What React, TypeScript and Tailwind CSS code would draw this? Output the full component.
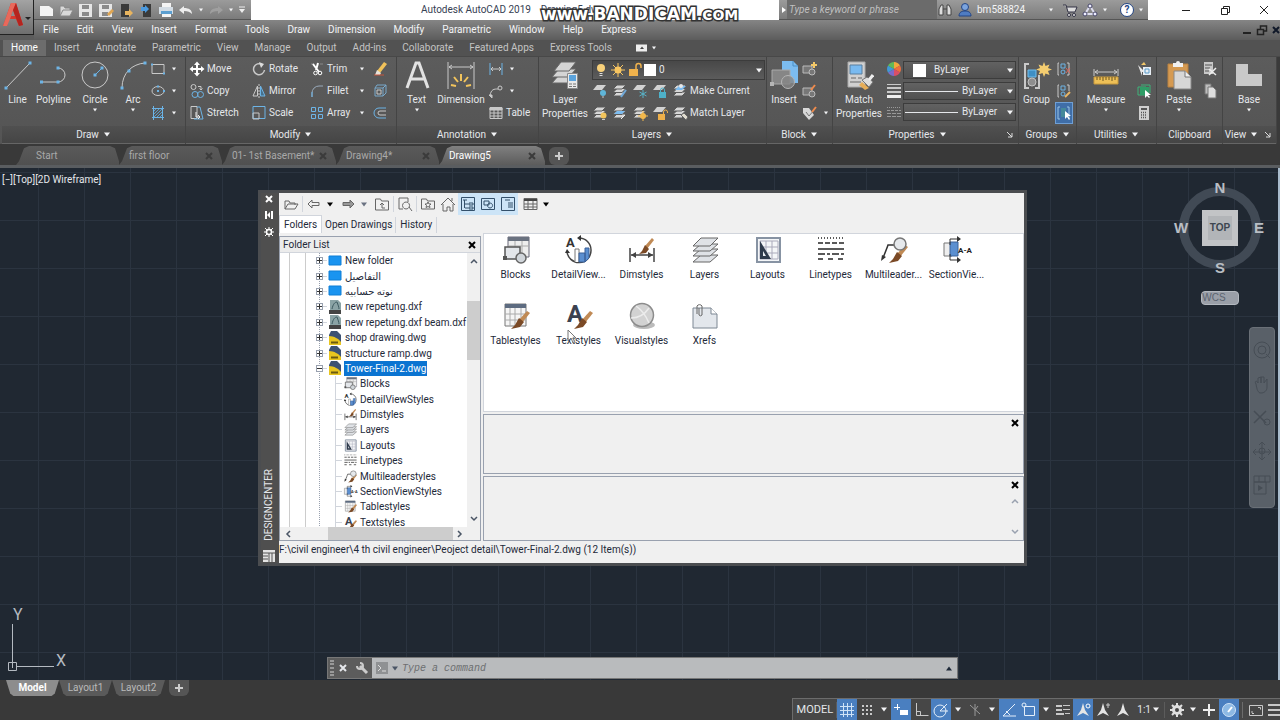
import type { ReactNode } from "react";
import clsx from "clsx";

type IconProps = { w?: number; h?: number; children: ReactNode; className?: string };

const Icon = ({ w = 16, h = 16, children, className }: IconProps) => (
  <svg
    width={w}
    height={h}
    viewBox={`0 0 ${w} ${h}`}
    fill="none"
    stroke="#c9c9c9"
    strokeWidth="1"
    className={clsx("shrink-0", className)}
    aria-hidden="true"
  >
    {children}
  </svg>
);

const Caret = ({ className }: { className?: string }) => (
  <svg width="8" height="5" viewBox="0 0 8 5" className={clsx("shrink-0", className ?? "fill-gray-100")} aria-hidden="true">
    <path d="M1 0.5h6L4 4.5z" />
  </svg>
);

const SmallCaret = () => (
  <svg width="6" height="4" viewBox="0 0 6 4" className="shrink-0 fill-gray-100" aria-hidden="true">
    <path d="M1 0.5h4L3 3.5z" />
  </svg>
);

const Cross = ({ className }: { className?: string }) => (
  <svg width="8" height="8" viewBox="0 0 8 8" fill="none" strokeWidth="2" className={clsx("shrink-0", className)} aria-hidden="true">
    <path d="M1 1l6 6M7 1L1 7" />
  </svg>
);

/* ---------- large ribbon icons ---------- */

const blue = "#6db4e6";

const big: Record<string, ReactNode> = {
  line: (
    <Icon w={30} h={30}>
      <path d="M3 28L27 3" />
      <path d="M1.5 26.5h3v3h-3zM25.5 1.5h3v3h-3z" fill={blue} stroke="none" />
    </Icon>
  ),
  polyline: (
    <Icon w={30} h={30}>
      <path d="M2 22H19a7 7 0 0 0 0-14" />
      <path d="M1 20.5h3v3H1zM17.5 20.5h3v3h-3zM17.5 6.5h3v3h-3z" fill={blue} stroke="none" />
    </Icon>
  ),
  circle: (
    <Icon w={30} h={30}>
      <circle cx="15" cy="15" r="13" />
      <path d="M15 15l7-7" stroke={blue} />
      <path d="M13.5 13.5h3v3h-3zM20.5 6.5h3v3h-3z" fill={blue} stroke="none" />
    </Icon>
  ),
  arc: (
    <Icon w={30} h={30}>
      <path d="M4 28C4 13 14 4 27 3" />
      <path d="M2.5 26.5h3v3h-3zM9.5 9.5h3v3h-3zM25.5 1.5h3v3h-3z" fill={blue} stroke="none" />
    </Icon>
  ),
  text: (
    <Icon w={30} h={30}>
      <path d="M5 28L14 3h3l9 25M9 19h13" stroke="#e2e2e2" strokeWidth="3" />
    </Icon>
  ),
  dimension: (
    <Icon w={30} h={30}>
      <path d="M2 2v27M28 2v27M3 7h24M6 5L3 7l3 2M24 5l3 2-3 2" />
      <path d="M15 14v7M8 17l4 5M22 17l-4 5M5 25l5 1M25 25l-5 1" stroke="#f2c45c" strokeWidth="2" />
    </Icon>
  ),
  layers: (
    <Icon w={30} h={30}>
      <g fill="#d4d4d4" stroke="#666">
        <path d="M2 23L9 15h17l-7 8z" />
        <path d="M2 17L9 9h17l-7 8z" />
        <path d="M4 11L11 2h15l-7 9z" />
      </g>
      <path d="M17.5 13.5h10v15h-10z" fill="#e8e8e8" stroke="#888" />
      <path d="M19 15h7v6h-7z" fill="#5ba3dc" stroke="none" />
      <path d="M19 24h3M23 24h3M19 26.5h3M23 26.5h3" stroke="#777" />
    </Icon>
  ),
  insert: (
    <Icon w={30} h={30}>
      <path d="M13 1h11l5 5v17H13z" fill="#7cbcf0" stroke="none" />
      <path d="M24 1v5h5" stroke="#4b8fc6" />
      <path d="M3 10h18v14H3z" fill="#868686" stroke="#a9a9a9" />
      <circle cx="19" cy="22" r="6.5" fill="#868686" fillOpacity="0.8" stroke="#b5b5b5" />
      <path d="M1 22h4v4H1z" fill="#b5b5b5" stroke="none" />
    </Icon>
  ),
  match: (
    <Icon w={30} h={30}>
      <path d="M4 2h17v25H4z" fill="#d0d0d0" stroke="#aaa" />
      <path d="M6 5h12v9H6z" fill="#79baf0" stroke="#5a7f9e" />
      <path d="M7 18h5M14 18h4M6 22h11" stroke="#666" />
      <path d="M18 22l7 6-4 2-6-5z" fill="#e6ad58" stroke="none" />
      <path d="M18 20l5-3 6 5-4 5z" fill="#dedede" stroke="#777" />
      <path d="M25 20l4-5" stroke="#eee" strokeWidth="3" />
    </Icon>
  ),
  group: (
    <Icon w={30} h={30}>
      <path d="M7 4H3v24h4M13 28h4V15" strokeWidth="2" />
      <path d="M6 10h8v7H6z" fill="#3f8fc4" stroke="#70bdec" />
      <circle cx="10" cy="22" r="4" fill="#8e8e8e" stroke="#c1c1c1" />
      <path d="M22 2l1.5 4 4-1.5L26 8l4 1.5-4 1.5 1.5 4-4-1.5L22 17l-1.5-4-4 1.5L18 11l-4-1.5L18 8l-1.5-3.5 4 1.5z" fill="#f4cd70" stroke="none" />
    </Icon>
  ),
  measure: (
    <Icon w={30} h={30}>
      <path d="M3 9v7M27 9v7M4 12h22M7 10l-3 2 3 2M23 10l3 2-3 2" />
      <path d="M3 17h24v7H3z" fill="#eec057" stroke="#c99a3c" />
      <path d="M6 17v3M9 17v3M12 17v4M15 17v3M18 17v3M21 17v4M24 17v3" stroke="#6b5520" />
    </Icon>
  ),
  paste: (
    <Icon w={30} h={30}>
      <path d="M4 4h20v23H4z" fill="#d59a52" stroke="#b98140" />
      <path d="M9 5V3h3a2 2 0 0 1 4 0h3v4H9z" fill="#f1f1f1" stroke="none" />
      <path d="M10 11h11l6 6v12H10z" fill="#d7d7d7" stroke="#888" />
      <path d="M21 11v6h6" stroke="#777" fill="#efefef" />
    </Icon>
  ),
  base: (
    <Icon w={30} h={30}>
      <path d="M2 4h12v10h14v12H2z" fill="#c9c9c9" stroke="none" />
    </Icon>
  ),
};

/* ---------- small ribbon icons ---------- */

const SheetBase = () => (
  <g fill="#d6d6d6" stroke="#5a5a5a">
    <path d="M1 13l4-4h9l-4 4z" />
    <path d="M1 9.5l4-4h9l-4 4z" />
    <path d="M1 6l4-4h9L10 6z" />
  </g>
);

const OneSheet = () => <path d="M1 7l4-5h9l-4 5z" fill="#d2d2d2" stroke="none" />;

const small: Record<string, ReactNode> = {
  rect: (
    <Icon>
      <path d="M2 3.5h12v9H2z" />
      <path d="M1 2.5h2v2H1zM13 11.5h2v2h-2z" fill={blue} stroke="none" />
    </Icon>
  ),
  ellipse: (
    <Icon>
      <ellipse cx="8" cy="8" rx="6" ry="4.5" />
      <path d="M7 7h2v2H7zM13 7h2v2h-2zM7 2.5h2v2H7z" fill={blue} stroke="none" />
    </Icon>
  ),
  hatch: (
    <Icon>
      <path d="M3.5 1v14M12.5 1v14M2 3.5h12M2 12.5h12" stroke={blue} />
      <path d="M4 6l2-2M4 9l5-5M4 12l8-8M7 12l5-5M10 12l2-2" stroke="#5a9cca" />
    </Icon>
  ),
  move: (
    <Icon>
      <path d="M8 2v12M2 8h12" stroke="#fff" strokeWidth="2" />
      <path d="M8 0.5L5 4h6zM8 15.5L5 12h6zM0.5 8L4 5v6zM15.5 8L12 5v6z" fill="#fff" stroke="none" />
    </Icon>
  ),
  copy: (
    <Icon>
      <circle cx="4.5" cy="4" r="2.5" />
      <circle cx="6" cy="11.5" r="3" stroke={blue} />
      <circle cx="11.5" cy="11.5" r="3" stroke={blue} />
      <path d="M9 3.5h3v3M10.5 5.5L12 7l1.5-1.5" />
    </Icon>
  ),
  stretch: (
    <Icon>
      <path d="M2 1.5h6v12H2z" />
      <path d="M8 2h3l3 12H5" stroke={blue} />
      <path d="M7 7v5h4M9 10l2 2-2 2" stroke="#eee" />
    </Icon>
  ),
  rotate: (
    <Icon>
      <path d="M11 3.5A5.5 5.5 0 1 0 13.5 9" strokeWidth="1.5" />
      <path d="M8 1l5 2-3 4z" fill="#ddd" stroke="none" />
    </Icon>
  ),
  mirror: (
    <Icon>
      <path d="M6.5 3v10H2z" />
      <path d="M9.5 3v10H14z" stroke={blue} fill="#47708c" />
      <path d="M8 1v14" strokeDasharray="2 1" />
    </Icon>
  ),
  scale: (
    <Icon>
      <path d="M2 1.5h12v12H2z" stroke={blue} />
      <path d="M2 8h6v6H2z" />
    </Icon>
  ),
  trim: (
    <Icon>
      <path d="M2 3h3M11 3h3" stroke="#888" />
      <path d="M4 3l6 8M9 2L7 9" stroke="#fff" strokeWidth="2" />
      <circle cx="6.5" cy="12" r="1.8" stroke="#fff" />
      <circle cx="11" cy="12" r="1.8" stroke="#fff" />
    </Icon>
  ),
  fillet: (
    <Icon>
      <path d="M3 14v-4a7 7 0 0 1 7-7h4" stroke="#9ab" />
      <path d="M3 14V9" stroke={blue} />
    </Icon>
  ),
  array: (
    <Icon>
      <path d="M2.5 2.5h4v4h-4zM9.5 2.5h4v4h-4zM2.5 9.5h4v4h-4zM9.5 9.5h4v4h-4z" stroke={blue} />
    </Icon>
  ),
  erase: (
    <Icon>
      <path d="M5 10L12 1l3 2-7 9z" fill="#f1c25a" stroke="none" />
      <path d="M5 9l4 3-1 2H3z" fill="#e8e2da" stroke="none" />
      <path d="M2 14h10" stroke="#c8553a" />
    </Icon>
  ),
  explode: (
    <Icon>
      <path d="M3 5h8v8H3zM3 5l2-3h9v8l-3 3M11 5l3-3" stroke="#79a9cc" />
      <path d="M5 7h4v4H5z" />
    </Icon>
  ),
  offset: (
    <Icon>
      <path d="M14 3H7a5 5 0 0 0 0 10h7" stroke={blue} />
      <path d="M14 6H8a2 2 0 0 0 0 4h6" />
    </Icon>
  ),
  linear: (
    <Icon>
      <path d="M2 2v12M14 2v12" stroke={blue} />
      <path d="M3 8h10M5 6L3 8l2 2M11 6l2 2-2 2" />
    </Icon>
  ),
  leader: (
    <Icon>
      <path d="M2 13C3 6 6 6 10 6" />
      <circle cx="12" cy="5" r="2" />
      <path d="M1 12h3v3z" fill="#c9c9c9" />
    </Icon>
  ),
  table: (
    <Icon>
      <path d="M2 2.5h12v11H2zM2 8h12M2 11h12M6 5v8M10 5v8" />
      <path d="M2 3h12v2H2z" fill="#c9c9c9" />
    </Icon>
  ),
  layerOff: (
    <Icon>
      <OneSheet />
      <circle cx="11" cy="10" r="3" fill="#5fb5d8" stroke="none" />
      <path d="M10 14h2" />
    </Icon>
  ),
  layerIso: (
    <Icon>
      <SheetBase />
      <path d="M9 14l5-7" stroke="#6fa8d8" strokeWidth="2" />
    </Icon>
  ),
  layerFreeze: (
    <Icon>
      <OneSheet />
      <path d="M11 7v8M7.5 9l7 4M14.5 9l-7 4" stroke="#58b3c8" />
    </Icon>
  ),
  layerLock: (
    <Icon>
      <OneSheet />
      <path d="M7 9h7v6H7z" fill="#4eb1c9" stroke="none" />
      <path d="M8.5 9V7a2 2 0 0 1 4 0v2" stroke="#4eb1c9" />
    </Icon>
  ),
  makeCurrent: (
    <Icon>
      <SheetBase />
      <path d="M3 7l4-4h7l-4 4z" fill="#7cbcf0" stroke="none" />
      <circle cx="9" cy="3" r="2" fill="#e8e8e8" stroke="none" />
    </Icon>
  ),
  layerOn: (
    <Icon>
      <SheetBase />
      <circle cx="11.5" cy="10.5" r="3" fill="#f2c45c" stroke="none" />
      <path d="M10 14.5h3" />
    </Icon>
  ),
  layerUniso: (
    <Icon>
      <SheetBase />
      <path d="M2 9l3-3h8l-3 3z" fill="#7cbcf0" stroke="none" />
      <path d="M9 14l4-4" stroke="#eee" />
    </Icon>
  ),
  layerThaw: (
    <Icon>
      <SheetBase />
      <circle cx="11" cy="11" r="3" fill="#f2b84c" stroke="none" />
      <path d="M11 6v10M6 11h10" stroke="#f2b84c" />
    </Icon>
  ),
  layerUnlock: (
    <Icon>
      <OneSheet />
      <path d="M6 9h7v6H6z" fill="#eeb04a" stroke="none" />
      <path d="M11.5 9V7a2 2 0 0 1 4 0v1" stroke="#eeb04a" />
    </Icon>
  ),
  matchLayer: (
    <Icon>
      <SheetBase />
      <path d="M9 10l3-2 4 4-2 3z" fill="#e0dccf" stroke="#666" />
    </Icon>
  ),
  createBlock: (
    <Icon>
      <path d="M1 5h9v7H1z" fill="#777" stroke="#bbb" />
      <circle cx="10" cy="11" r="3" fill="#777" stroke="#bbb" />
      <path d="M12 1v6M9 4h6" stroke="#f3c868" strokeWidth="2" />
    </Icon>
  ),
  editBlock: (
    <Icon>
      <path d="M1 5h9v7H1z" fill="#777" stroke="#bbb" />
      <circle cx="10" cy="11" r="3" fill="#777" stroke="#bbb" />
      <path d="M9 7l4-5" stroke="#f08b4c" strokeWidth="2" />
    </Icon>
  ),
  attribs: (
    <Icon>
      <path d="M1 3h6l5 7-5 5-6-7z" fill="#d8d8d8" stroke="none" />
      <path d="M4 7l3 4 6-7" stroke="#777" />
      <path d="M10 7l4-5" stroke="#f08b4c" strokeWidth="2" />
    </Icon>
  ),
  colour: (
    <Icon>
      <g stroke="none">
        <path d="M8 8V1a7 7 0 0 1 6 3.5z" fill="#f2a93b" />
        <path d="M8 8l6-3.5a7 7 0 0 1 0 7z" fill="#ee6f3e" />
        <path d="M8 8l6 3.5A7 7 0 0 1 8 15z" fill="#d94f66" />
        <path d="M8 8v7a7 7 0 0 1-6-3.5z" fill="#7c6bc9" />
        <path d="M8 8l-6 3.5a7 7 0 0 1 0-7z" fill="#3f9ad6" />
        <path d="M8 8L2 4.5A7 7 0 0 1 8 1z" fill="#62b957" />
      </g>
    </Icon>
  ),
  lineweight: (
    <Icon>
      <path d="M1 1.5h14" />
      <path d="M1 5h14M1 9h14" strokeWidth="2" />
      <path d="M1 13.5h14" stroke="#eee" strokeWidth="3" />
    </Icon>
  ),
  linetype: (
    <Icon>
      <path d="M1 2.5h14" strokeDasharray="1 1" stroke="#999" />
      <path d="M1 5.5h14" strokeDasharray="3 1" stroke="#999" />
      <path d="M1 8.5h14M1 11.5h14" strokeDasharray="4 1" stroke="#999" />
    </Icon>
  ),
  ungroup: (
    <Icon>
      <path d="M3 2H2v12h1M11 2h2v12h-2" />
      <path d="M5 3h4v4H5z" stroke={blue} />
      <circle cx="7" cy="11" r="2" stroke={blue} />
      <path d="M10 7l4 5M14 7l-4 5" stroke="#d9655a" />
    </Icon>
  ),
  groupEdit: (
    <Icon>
      <path d="M3 2H2v12h1M11 2h2v6" />
      <path d="M5 3h4v4H5z" stroke={blue} />
      <circle cx="7" cy="11" r="2" stroke={blue} />
      <path d="M9 14l5-5" stroke="#e9b564" strokeWidth="2" />
    </Icon>
  ),
  groupSelect: (
    <Icon>
      <path d="M4 2H2v12h2M11 2h2v12" stroke="#9cc4e4" />
      <path d="M5 3h5v9H5z" fill="#45899a" stroke="none" />
      <path d="M9 6v8l2-2 2 3 1-1-2-3h3z" fill="#fff" stroke="none" />
    </Icon>
  ),
  quickSelect: (
    <Icon>
      <path d="M2 4l7 7H6v4z" fill="#e8e8e8" stroke="none" />
      <path d="M7 6h8v8H7z" fill="#e8eef4" stroke="none" />
      <path d="M9 8h4v4H9z" stroke="#5a9cca" />
      <path d="M8 1l2 3H5z" fill="#f3c868" stroke="none" />
    </Icon>
  ),
  selectAll: (
    <Icon>
      <path d="M2 4h8v8H2zM5 2h9v8" stroke="#3fb47b" />
      <path d="M4 4h9v8H4z" fill="#2f9d66" stroke="none" />
      <path d="M9 7v8l2-2 2 2 1-1-2-2h3z" fill="#fff" stroke="none" />
    </Icon>
  ),
  calculator: (
    <Icon>
      <path d="M3 1h10v14H3z" fill="#cfcfcf" stroke="none" />
      <path d="M5 3h6v2H5z" fill="#555" stroke="none" />
      <path d="M5 7.5h6M5 10h6M5 12.5h6" stroke="#555" strokeDasharray="1 1" strokeWidth="1.5" />
    </Icon>
  ),
  cut: (
    <Icon>
      <path d="M2 1h9v12H2z" fill="#c8c8c8" stroke="none" />
      <path d="M3 4h7M3 7h5M3 10h4" stroke="#555" />
      <path d="M7 8l7 6M14 7l-7 7" stroke="#eee" strokeWidth="1.5" />
    </Icon>
  ),
  copyClip: (
    <Icon>
      <path d="M3 1h6v10H3z" fill="#bdbdbd" stroke="#777" />
      <path d="M6 4h5l3 3v8H6z" fill="#dedede" stroke="#777" />
    </Icon>
  ),
};

/* ---------- ribbon building blocks ---------- */

type BigButtonProps = { icon: string; label: string; second?: string; caret?: boolean; className: string };

const BigButton = ({ icon, label, second, caret, className }: BigButtonProps) => (
  <button className={clsx("flex shrink-0 flex-col items-center pt-[2px] whitespace-nowrap", className)}>
    {big[icon]}
    <span className="mt-[3px] leading-[14px]">{label}</span>
    {second && <span className="leading-[14px]">{second}</span>}
    {caret && (
      <span className="pt-px">
        <SmallCaret />
      </span>
    )}
  </button>
);

type SmallButtonProps = { icon: string; label?: string; caret?: boolean; active?: boolean };

const SmallButton = ({ icon, label, caret, active }: SmallButtonProps) => (
  <button
    aria-label={label ?? icon}
    className={clsx("flex h-[22px] items-center gap-px whitespace-nowrap", active && "border border-[#6f9fd4] bg-[#3f6ea8]")}
  >
    {small[icon]}
    {label && <span className="pl-px">{label}</span>}
    {caret && (
      <span className="ml-auto pl-1">
        <SmallCaret />
      </span>
    )}
  </button>
);

type PanelProps = { title: string; arrow?: boolean; launcher?: boolean; className: string; children: ReactNode };

const Panel = ({ title, arrow = true, launcher, className, children }: PanelProps) => (
  <section className={clsx("flex shrink-0 flex-col border-r border-[#444]", className)}>
    <div className="flex h-[69px] gap-px pt-px">{children}</div>
    <div className="flex h-[18px] items-center justify-center gap-1 border-b border-[#666] bg-gradient-to-b from-[#505050] to-[#454545]">
      <span className={clsx(launcher && "ml-auto")}>{title}</span>
      {arrow && <Caret />}
      {launcher && (
        <svg width="8" height="8" viewBox="0 0 8 8" className="mr-1 ml-auto shrink-0" fill="none" stroke="#ddd" aria-hidden="true">
          <path d="M1 1l5 5M6 2v4H2" />
        </svg>
      )}
    </div>
  </section>
);

const PropertySelect = ({ label, kind }: { label: string; kind: "colour" | "line" }) => (
  <label className="flex h-[18px] items-center gap-1 border border-[#3c3c3c] bg-gradient-to-b from-[#626262] to-[#505050] pr-px pl-px">
    {kind === "colour" ? <span className="mr-1 ml-2 size-[13px] bg-white" /> : <span className="h-px w-[53px] bg-gray-200" />}
    <select aria-label={label} className="w-0 flex-1 appearance-none bg-transparent outline-none">
      <option>ByLayer</option>
    </select>
    <Caret />
  </label>
);

/* ---------- title bar and menus ---------- */

const menus = ["File", "Edit", "View", "Insert", "Format", "Tools", "Draw", "Dimension", "Modify", "Parametric", "Window", "Help", "Express"];

const ribbonTabs = ["Home", "Insert", "Annotate", "Parametric", "View", "Manage", "Output", "Add-ins", "Collaborate", "Featured Apps", "Express Tools"];

const quickAccess: { name: string; icon: ReactNode }[] = [
  { name: "New", icon: <path d="M2 4h9l4 3v7H2z" fill="#f4f4f4" stroke="none" /> },
  { name: "Open", icon: <path d="M2 13V4h4l1 2h5v2h3l-3 6H2l3-6h7" fill="#d9d9d9" stroke="#888" /> },
  {
    name: "Save",
    icon: (
      <g stroke="none">
        <path d="M1 2h13v13H1z" fill="#e6e6e6" />
        <path d="M4 3h7v4H4zM4 10h7v4H4z" fill="#8a8a8a" />
      </g>
    ),
  },
  {
    name: "Save As",
    icon: (
      <g stroke="none">
        <path d="M1 2h13v13H1z" fill="#e6e6e6" />
        <path d="M4 3h7v4H4zM4 10h6v4H4z" fill="#8a8a8a" />
        <path d="M9 12l5-5 2 2-5 5z" fill="#e0a653" />
      </g>
    ),
  },
  {
    name: "Open from mobile",
    icon: (
      <g stroke="none">
        <path d="M3 2h8v13H3z" fill="#3a3a3a" />
        <path d="M7 9h4V7l4 4-4 4v-2H7z" fill="#e8b45f" />
      </g>
    ),
  },
  {
    name: "Save to mobile",
    icon: (
      <g stroke="none">
        <path d="M5 2h8v13H5z" fill="#3a3a3a" />
        <path d="M3 5h4V3l4 4-4 4V9H3z" fill="#4c9be0" />
      </g>
    ),
  },
  {
    name: "Plot",
    icon: (
      <g stroke="none">
        <path d="M4 1h9v5H4zM4 11h9v4H4z" fill="#f4f4f4" />
        <path d="M1 5h14v7H1z" fill="#d4dde5" />
        <path d="M3 9h11v3H3z" fill="#5c9fd0" />
      </g>
    ),
  },
  { name: "Undo", icon: <path d="M1 8l5-4v2c5 0 8 2 8 6-2-2-4-3-8-3v3z" fill="#eee" stroke="none" /> },
];

const TitleBar = () => (
  <div className="flex h-5 bg-white text-gray-800">
    <div className="flex shrink-0 items-center gap-1 border-b border-[#555] bg-gradient-to-b from-[#9b9b9b] to-[#7b7b7b] pr-[5px] pl-1">
      {quickAccess.map((e) => (
        <button key={e.name} aria-label={e.name}>
          <Icon>{e.icon}</Icon>
        </button>
      ))}
      <SmallCaret />
      <button aria-label="Redo">
        <Icon>
          <path d="M15 8l-5-4v2C5 6 2 8 2 12c2-2 4-3 8-3v3z" fill="#9f9f9f" stroke="none" />
        </Icon>
      </button>
      <SmallCaret />
      <button aria-label="Customize">
        <Icon w={8} h={8}>
          <path d="M1 1h6" stroke="#eee" />
          <path d="M1 3h6L4 7z" fill="#eee" stroke="none" />
        </Icon>
      </button>
    </div>
    <h1 className="flex-1 truncate pl-[170px] leading-5 text-gray-700">
      Autodesk AutoCAD 2019 &nbsp;&nbsp; Drawing5.dwg
    </h1>
    <div className="flex w-[369px] shrink-0 items-center border-b border-[#555] bg-gradient-to-b from-[#9b9b9b] to-[#7b7b7b] text-gray-100">
      <svg width="8" height="8" viewBox="0 0 8 8" className="fill-white" aria-hidden="true">
        <path d="M3 1l4 3-4 3z" />
      </svg>
      <input
        aria-label="Search"
        placeholder="Type a keyword or phrase"
        className="h-[19px] w-[150px] bg-[#6b6b6b] px-[2px] italic outline-none placeholder:text-[#c0c0c0]"
      />
      <button aria-label="Find">
        <Icon>
          <path d="M2 13V7l2-4h2v10zM10 13V3h2l2 4v6z" fill="#ddd" stroke="#444" />
          <path d="M6 7h4" stroke="#444" />
        </Icon>
      </button>
      <button className="ml-1 flex items-center">
        <Icon>
          <circle cx="8" cy="5" r="3.5" fill="#7ba4de" stroke="#234584" />
          <path d="M2 14c0-4 3-5 6-5s6 1 6 5z" fill="#4f7cc2" stroke="#234584" />
        </Icon>
        <span className="pl-1">bm588824</span>
      </button>
      <span className="ml-auto">
        <SmallCaret />
      </span>
      <button aria-label="App store" className="ml-2">
        <Icon>
          <path d="M1 3h3l2 7h7l2-5H5" stroke="#334" fill="#ddd" />
          <circle cx="7" cy="13" r="1.5" fill="#eee" stroke="#334" />
          <circle cx="12" cy="13" r="1.5" fill="#eee" stroke="#334" />
        </Icon>
      </button>
      <button aria-label="Stay connected" className="mx-1 flex items-center gap-1">
        <Icon>
          <path d="M8 4l5 8H3z" stroke="#dde" strokeWidth="2" />
          <circle cx="8" cy="4" r="2" fill="#eef" stroke="#446" />
          <circle cx="3" cy="12" r="2" fill="#eef" stroke="#446" />
          <circle cx="13" cy="12" r="2" fill="#eef" stroke="#446" />
        </Icon>
        <SmallCaret />
      </button>
      <button aria-label="Help" className="mr-1 ml-2 flex items-center gap-1">
        <span className="flex size-[14px] items-center justify-center rounded-full border border-[#234584] bg-white font-bold text-[#234584]">?</span>
        <SmallCaret />
      </button>
    </div>
    <div className="flex w-[132px] shrink-0 items-center justify-end gap-[23px] pr-2">
      <button aria-label="Minimize">
        <Icon>
          <path d="M4 8.5h8" stroke="#222" />
        </Icon>
      </button>
      <button aria-label="Restore">
        <Icon>
          <path d="M4.5 6.5h6v6h-6zM6.5 6.5v-2h6v6h-2" stroke="#222" />
        </Icon>
      </button>
      <button aria-label="Close">
        <Icon>
          <path d="M4 4l8 8M12 4l-8 8" stroke="#222" />
        </Icon>
      </button>
    </div>
  </div>
);

const MenuBar = () => (
  <nav className="flex h-5 items-center bg-gradient-to-b from-[#858585] to-[#5c5c5c] text-gray-100">
    {menus.map((e) => (
      <button key={e} className="px-[9px]">
        {e}
      </button>
    ))}
    <div className="ml-auto flex items-center gap-1">
      <Icon w={10} h={10}>
        <path d="M1 8h8" stroke="#222" strokeWidth="2" />
      </Icon>
      <Icon w={12} h={12}>
        <path d="M1.5 5.5h6v5h-6zM4.5 5v-3h6v5h-3" stroke="#222" strokeWidth="1.5" />
      </Icon>
      <Cross className="stroke-gray-900" />
    </div>
  </nav>
);

const Header = () => (
  <header className="relative">
    <div className="flex bg-[#5c5c5c]">
      <button aria-label="Application menu" className="flex h-[35px] w-[34px] shrink-0 items-center border-r border-b border-[#222] bg-gradient-to-b from-[#a3a3a3] to-[#6e6e6e]">
        <svg width="33" height="30" viewBox="0 0 33 30" aria-hidden="true">
          <path d="M3 24L11 1h5l7 22-4 1-3-7H9l-2 7z" fill="#d8392f" />
          <path d="M11 1h5l-3 8-3 8-3 7-4 0z" fill="#e8695b" />
          <path d="M13 8l2 6h-4z" fill="#8d8d8d" />
          <path d="M16 1l7 22-4 1-6-16z" fill="#b5241f" />
          <path d="M25 15h6l-3 3z" fill="#222" />
        </svg>
      </button>
      <div className="min-w-0 flex-1">
        <TitleBar />
        <MenuBar />
      </div>
    </div>
    <span className="absolute top-1 left-[541px] font-['DejaVu_Sans'] text-[17px] leading-5 font-bold text-white [-webkit-text-stroke:3px_#333] [paint-order:stroke_fill]">
      www.BANDICAM<span className="text-[14px]">.COM</span>
    </span>
  </header>
);

/* ---------- ribbon ---------- */

const Ribbon = () => (
  <div className="bg-[#565656] text-gray-200">
    <div className="flex h-[17px] items-center border-b border-[#484848] bg-[#525252] pl-[3px] text-[#c4c4c4]">
      {ribbonTabs.map((e) => (
        <button key={e} className={clsx("h-full px-2", e === "Home" && "bg-[#6c6c6c] text-white")}>
          {e}
        </button>
      ))}
      <div className="ml-4 flex items-center gap-1">
        <Icon w={11} h={8}>
          <path d="M0 0.5h11v7H0z" fill="#eee" stroke="none" />
          <path d="M4 5h4L6 2.5z" fill="#444" stroke="none" />
        </Icon>
        <SmallCaret />
      </div>
    </div>

    <div className="flex bg-gradient-to-b from-[#5c5c5c] to-[#545454] pl-[2px]">
      <Panel title="Draw" className="w-[184px]">
        <BigButton icon="line" label="Line" className="w-[31px]" />
        <BigButton icon="polyline" label="Polyline" className="w-[39px]" />
        <BigButton icon="circle" label="Circle" caret className="w-[42px]" />
        <BigButton icon="arc" label="Arc" caret className="w-8" />
        <div>
          <SmallButton icon="rect" caret />
          <SmallButton icon="ellipse" caret />
          <SmallButton icon="hatch" caret />
        </div>
      </Panel>

      <Panel title="Modify" className="w-[211px]">
        <div className="w-[63px] pl-[3px]">
          <SmallButton icon="move" label="Move" />
          <SmallButton icon="copy" label="Copy" />
          <SmallButton icon="stretch" label="Stretch" />
        </div>
        <div className="w-[56px] pl-px">
          <SmallButton icon="rotate" label="Rotate" />
          <SmallButton icon="mirror" label="Mirror" />
          <SmallButton icon="scale" label="Scale" />
        </div>
        <div className="grid w-[58px] content-start pl-[2px]">
          <SmallButton icon="trim" label="Trim" caret />
          <SmallButton icon="fillet" label="Fillet" caret />
          <SmallButton icon="array" label="Array" caret />
        </div>
        <div className="pl-[6px]">
          <SmallButton icon="erase" />
          <SmallButton icon="explode" />
          <SmallButton icon="offset" />
        </div>
      </Panel>

      <Panel title="Annotation" className="w-[142px]">
        <BigButton icon="text" label="Text" caret className="w-[39px]" />
        <BigButton icon="dimension" label="Dimension" className="w-12" />
        <div className="pl-[2px]">
          <SmallButton icon="linear" caret />
          <SmallButton icon="leader" caret />
          <SmallButton icon="table" label="Table" />
        </div>
      </Panel>

      <Panel title="Layers" className="w-[228px]">
        <BigButton icon="layers" label="Layer" second="Properties" className="w-[52px]" />
        <div className="min-w-0 flex-1">
          <label className="mt-[2px] mr-px flex h-5 items-center gap-px border border-[#3c3c3c] bg-gradient-to-b from-[#484848] to-[#5c5c5c] pr-px">
            <Icon>
              <circle cx="8" cy="6" r="4" fill="#f7d07a" stroke="none" />
              <path d="M6.5 11.5h3M6.5 13.5h3" stroke="#ddd" />
            </Icon>
            <Icon>
              <circle cx="8" cy="8" r="3.5" fill="#f7c560" stroke="none" />
              <path d="M8 1v14M1 8h14M3 3l10 10M13 3L3 13" stroke="#f7c560" />
            </Icon>
            <Icon>
              <path d="M2 7h9v7H2z" fill="#f0b24c" stroke="none" />
              <path d="M9 7V4a2.5 2.5 0 0 1 5 0v2" stroke="#f0b24c" strokeWidth="1.5" />
            </Icon>
            <span className="size-[12px] bg-white" />
            <select aria-label="Layer" className="ml-[2px] w-0 flex-1 appearance-none bg-transparent outline-none">
              <option>0</option>
            </select>
            <Caret />
          </label>
          <div className="flex gap-1">
            <SmallButton icon="layerOff" />
            <SmallButton icon="layerIso" />
            <SmallButton icon="layerFreeze" />
            <SmallButton icon="layerLock" />
            <SmallButton icon="makeCurrent" label="Make Current" />
          </div>
          <div className="flex gap-1">
            <SmallButton icon="layerOn" />
            <SmallButton icon="layerUniso" />
            <SmallButton icon="layerThaw" />
            <SmallButton icon="layerUnlock" />
            <SmallButton icon="matchLayer" label="Match Layer" />
          </div>
        </div>
      </Panel>

      <Panel title="Block" className="w-[66px]">
        <BigButton icon="insert" label="Insert" className="w-[34px]" />
        <div>
          <SmallButton icon="createBlock" />
          <SmallButton icon="editBlock" />
          <SmallButton icon="attribs" caret />
        </div>
      </Panel>

      <Panel title="Properties" launcher className="w-[186px]">
        <BigButton icon="match" label="Match" second="Properties" className="w-[52px]" />
        <div>
          <SmallButton icon="colour" />
          <SmallButton icon="lineweight" />
          <SmallButton icon="linetype" />
        </div>
        <div className="mr-[2px] flex min-w-0 flex-1 flex-col gap-[3px] pt-[3px]">
          <PropertySelect label="Object colour" kind="colour" />
          <PropertySelect label="Lineweight" kind="line" />
          <PropertySelect label="Linetype" kind="line" />
        </div>
      </Panel>

      <Panel title="Groups" className="w-[58px]">
        <BigButton icon="group" label="Group" className="w-[35px]" />
        <div className="flex flex-col items-center">
          <SmallButton icon="ungroup" />
          <SmallButton icon="groupEdit" />
          <SmallButton icon="groupSelect" active />
        </div>
      </Panel>

      <Panel title="Utilities" className="w-[80px]">
        <BigButton icon="measure" label="Measure" caret className="w-[58px]" />
        <div>
          <SmallButton icon="quickSelect" />
          <SmallButton icon="selectAll" />
          <SmallButton icon="calculator" />
        </div>
      </Panel>

      <Panel title="Clipboard" arrow={false} className="w-[66px]">
        <BigButton icon="paste" label="Paste" caret className="w-[44px]" />
        <div>
          <SmallButton icon="cut" />
          <SmallButton icon="copyClip" />
        </div>
      </Panel>

      <Panel title="View" launcher className="w-[54px]">
        <BigButton icon="base" label="Base" caret className="w-[52px]" />
      </Panel>
      <div className="flex-1 bg-[#3a3a3a]" />
    </div>
  </div>
);

/* ---------- drawing tabs ---------- */

const files = [
  { name: "Start", size: "w-[103px] pl-5" },
  { name: "first floor", size: "w-[103px] pl-[10px]" },
  { name: "01- 1st Basement*", size: "w-[114px] pl-[10px]" },
  { name: "Drawing4*", size: "w-[103px] pl-[10px]" },
  { name: "Drawing5", size: "w-[106px] pl-[10px]" },
];

const FileTabs = () => (
  <div className="flex h-[24px] items-end border-b-[3px] border-[#5a5d60] bg-[#393939] pl-4">
    {files.map((e) => (
      <button
        key={e.name}
        className={clsx(
          "flex h-[19px] shrink-0 items-center justify-between bg-gradient-to-b pr-[9px] [clip-path:polygon(0_100%,3px_80%,8px_12%,13px_0,calc(100%-9px)_0,calc(100%-4px)_12%,100%_80%,100%_100%)]",
          e.size,
          e.name === "Drawing5" ? "from-[#808080] to-[#5c5c5c] text-white" : "from-[#5a5a5a] to-[#505050] text-[#a9a9a9]",
        )}
      >
        <span className="whitespace-nowrap">{e.name}</span>
        {e.name !== "Start" && <Cross className="stroke-[#3b3b3b]" />}
      </button>
    ))}
    <button aria-label="New drawing" className="ml-1 flex h-[18px] w-5 items-center justify-center rounded-md bg-[#555]">
      <Icon w={8} h={8}>
        <path d="M4 0v8M0 4h8" stroke="#ccc" strokeWidth="2" />
      </Icon>
    </button>
  </div>
);

/* ---------- DesignCenter palette ---------- */

const Brush = () => (
  <g stroke="none">
    <path d="M18 21l9-10 3 2-8 10z" fill="#c08a55" />
    <path d="M19 18l5 4-4 5-9 2 4-4z" fill="#7b4a26" />
  </g>
);

const categories: { name: string; label: string; icon: ReactNode }[] = [
  {
    name: "Blocks",
    label: "Blocks",
    icon: (
      <>
        <path d="M8 3h21v20H8z" fill="#eee" stroke="#667" />
        <path d="M8 3h21v4H8z" fill="#6a7280" stroke="none" />
        <path d="M15 7v6M22 7v15M8 12h21" stroke="#aaa" />
        <path d="M5 13h15v12H5z" fill="#e3e6ea" stroke="#555" strokeWidth="1.5" />
        <circle cx="21" cy="24" r="5" fill="#d0d5da" stroke="#666" strokeWidth="1.5" />
        <path d="M3 22h4v4H3z" fill="#555" stroke="none" />
      </>
    ),
  },
  {
    name: "DetailViewStyles",
    label: "DetailView...",
    icon: (
      <>
        <text x="3" y="13" fontSize="13" fontWeight="bold" fill="#333" stroke="none">A</text>
        <path d="M16 4a12 12 0 0 1 12 12a12 12 0 0 1-24 1" stroke="#444" strokeWidth="1.5" />
        <path d="M12 28V15h4v13" fill="#fff" stroke="#777" />
        <path d="M16 19h6v9h-6zM22 14h4v10l-4 4z" fill="#5b8fd0" stroke="#3a6198" />
        <path d="M18 1v6l-4-3zM2 19l2-4 3 4z" fill="#333" stroke="none" />
      </>
    ),
  },
  {
    name: "Dimstyles",
    label: "Dimstyles",
    icon: (
      <>
        <path d="M4 14v14M28 14v14M5 21h22" stroke="#444" strokeWidth="1.5" />
        <path d="M5 21l5-3v6zM27 21l-5-3v6z" fill="#444" stroke="none" />
        <path d="M19 12l7-8 2 2-7 9z" fill="#c08a55" stroke="none" />
        <path d="M19 11l4 4-3 4-7 1 3-3z" fill="#7b4a26" stroke="none" />
      </>
    ),
  },
  {
    name: "Layers",
    label: "Layers",
    icon: (
      <g fill="#dfe2e6" stroke="#666">
        <path d="M4 28l8-7h17l-8 7z" />
        <path d="M4 22l8-7h17l-8 7z" />
        <path d="M4 17l8-7h17l-8 7z" />
        <path d="M4 12l8-8h17l-8 8z" />
      </g>
    ),
  },
  {
    name: "Layouts",
    label: "Layouts",
    icon: (
      <>
        <path d="M5 4h23v24H5z" fill="#f4f6f8" stroke="#8793a3" strokeWidth="2" />
        <path d="M8 7h18v18H8zM14 7v18M20 7v18M8 13h18M8 19h18" stroke="#aab" />
        <path d="M8 7v18h11z" fill="#2f3b4c" stroke="none" />
        <path d="M11 17v5h3z" fill="#e8ecf0" stroke="none" />
      </>
    ),
  },
  {
    name: "Linetypes",
    label: "Linetypes",
    icon: (
      <g stroke="#5a5a5a" strokeWidth="2">
        <path d="M3 4h26" strokeDasharray="1 2" />
        <path d="M3 9h26" strokeDasharray="5 2" />
        <path d="M3 15h26" />
        <path d="M3 20h26" strokeDasharray="7 2 3 2" />
        <path d="M3 25h26" strokeDasharray="5 5" />
      </g>
    ),
  },
  {
    name: "Multileaderstyles",
    label: "Multileader...",
    icon: (
      <>
        <path d="M5 24c2-5 4-10 5-13h7" stroke="#333" strokeWidth="1.5" />
        <path d="M3 27l1-6 4 2z" fill="#333" stroke="none" />
        <Brush />
        <circle cx="22" cy="10" r="6" fill="#e6e9ec" stroke="#777" strokeWidth="1.5" />
      </>
    ),
  },
  {
    name: "SectionViewStyles",
    label: "SectionVie...",
    icon: (
      <>
        <path d="M3 9h8v13H3z" fill="#eee" stroke="#777" />
        <path d="M9 8h8v14H9z" fill="#5b8fd0" stroke="#3a6198" />
        <path d="M9 11V5h8M9 20v6h8" stroke="#333" />
        <path d="M16 2l4 3-4 3zM16 23l4 3-4 3z" fill="#333" stroke="none" />
        <text x="17" y="19" fontSize="8" fontWeight="bold" fill="#222" stroke="none">A-A</text>
      </>
    ),
  },
  {
    name: "Tablestyles",
    label: "Tablestyles",
    icon: (
      <>
        <path d="M5 4h21v22H5z" fill="#f5f5f5" stroke="#777" />
        <path d="M5 4h21v4H5z" fill="#5d6b80" stroke="none" />
        <path d="M5 14h21M5 20h21M10 8v18M15 8v18M21 8v18" stroke="#aaa" />
        <Brush />
      </>
    ),
  },
  {
    name: "Textstyles",
    label: "Textstyles",
    icon: (
      <>
        <text x="4" y="22" fontSize="24" fontWeight="bold" fill="#3b4250" stroke="none">A</text>
        <Brush />
      </>
    ),
  },
  {
    name: "Visualstyles",
    label: "Visualstyles",
    icon: (
      <>
        <ellipse cx="18" cy="25" rx="11" ry="4" fill="#bbb" stroke="none" />
        <circle cx="16" cy="15" r="11.5" fill="#d2d2d2" stroke="#8c8c8c" strokeWidth="1.5" />
        <path d="M10 6c6 4 10 10 13 17M5 18c7 0 14-4 18-10" stroke="#ececec" strokeWidth="1.5" />
      </>
    ),
  },
  {
    name: "Xrefs",
    label: "Xrefs",
    icon: (
      <>
        <path d="M4 8h18l6 6v14H4z" fill="#e3e7ec" stroke="#7d8793" />
        <path d="M22 8v6h6" fill="#fff" stroke="#7d8793" />
        <path d="M8 14V6a3 3 0 0 1 5 0v9a2 2 0 0 1-3 0V8" stroke="#666" />
      </>
    ),
  },
];

type TreeNode = { name: string; kind: "folder" | "dxf" | "dwg"; open?: boolean };

const treeNodes: TreeNode[] = [
  { name: "New folder", kind: "folder" },
  { name: "التفاصيل", kind: "folder" },
  { name: "نوته حسابيه", kind: "folder" },
  { name: "new repetung.dxf", kind: "dxf" },
  { name: "new repetung.dxf beam.dxf", kind: "dxf" },
  { name: "shop drawing.dwg", kind: "dwg" },
  { name: "structure ramp.dwg", kind: "dwg" },
  { name: "Tower-Final-2.dwg", kind: "dwg", open: true },
];

const NodeIcon = ({ kind }: { kind: TreeNode["kind"] }) => (
  <Icon w={14} h={14}>
    {kind === "folder" && <path d="M1 2h12v9H1z" fill="#1a94f0" stroke="#0f7fd6" />}
    {kind === "dxf" && (
      <>
        <path d="M2 0h8l3 3v11H2z" fill="#8aa3a5" stroke="none" />
        <path d="M4 9c1-5 3-7 5-7 1 3 2 5 2 7" stroke="#3c5a60" />
        <path d="M1 10h12v4H1z" fill="#444" stroke="none" />
      </>
    )}
    {kind === "dwg" && (
      <>
        <path d="M3 0h6l4 4v10H1V4z" fill="#3d5273" stroke="none" />
        <path d="M1 5c5 0 10 3 12 6v3H1z" fill="#e8c520" stroke="none" />
        <path d="M3 11.5h7" stroke="#6b5a10" strokeWidth="2" />
      </>
    )}
  </Icon>
);

const TreeView = () => (
  <div className="min-w-0 flex-1 overflow-hidden bg-white bg-[linear-gradient(to_right,#ccc_1px,transparent_1px),linear-gradient(to_right,#ccc_1px,transparent_1px)] bg-[length:16px_100%,16px_100%] bg-no-repeat [background-position:9px_0,25px_0]">
    <ul className="ml-[39px] grid h-[277px] auto-rows-fr border-l border-dotted border-gray-400">
      {treeNodes.map((e) => (
        <li key={e.name} className="-ml-1 flex min-h-0 items-center">
          <span className="flex size-[7px] shrink-0 items-center justify-center border border-gray-400 bg-white">
            <svg width="5" height="5" viewBox="0 0 5 5" stroke="#333" aria-hidden="true">
              <path d={e.open ? "M0 2.5h5" : "M0 2.5h5M2.5 0v5"} />
            </svg>
          </span>
          <span className="mr-px h-px w-1 bg-gray-300" />
          <NodeIcon kind={e.kind} />
          <span className={clsx("ml-[2px] px-px leading-[15px] whitespace-nowrap", e.open && "bg-[#0b74d1] text-white")}>{e.name}</span>
        </li>
      ))}
      {categories.slice(0, 10).map((e) => (
        <li key={e.name} className="ml-[15px] flex min-h-0 items-center border-l border-gray-300">
          <span className="mr-px h-px w-[6px] bg-gray-300" />
          <svg width="15" height="15" viewBox="0 0 32 32" fill="none" className="shrink-0" aria-hidden="true">
            {e.icon}
          </svg>
          <span className="ml-[2px] leading-[15px]">{e.name}</span>
        </li>
      ))}
    </ul>
  </div>
);

const Chevron = ({ d, className }: { d: string; className?: string }) => (
  <svg width="8" height="8" viewBox="0 0 8 8" fill="none" strokeWidth="1.5" className={clsx("shrink-0", className ?? "stroke-gray-600")} aria-hidden="true">
    <path d={d} />
  </svg>
);

const tools: { name: string; d: string; active?: boolean; caret?: boolean; sep?: boolean }[] = [
  { name: "Load", d: "M2 13V5h4l1 2h5v2M2 13l3-5h10l-3 5z", sep: true },
  { name: "Back", d: "M2 8l4-4v2.5h7v3H6V12z", caret: true },
  { name: "Forward", d: "M14 8l-4-4v2.5H3v3h7V12z", caret: true },
  { name: "Up", d: "M1.5 3h5l1 2h7v9h-13zM8 12V7M6 9l2-2 2 2M8 12h3", sep: true },
  { name: "Search", d: "M2 2h9v4M2 2v11h4M9 6a3.5 3.5 0 1 0 .1 0M12 11l3 4", sep: true },
  { name: "Favorites", d: "M1.5 3h5l1 2h7v8h-13zM8 6l1 2h2l-1.5 1.5.5 2L8 10.5l-2 1 .5-2L5 8h2z" },
  { name: "Home", d: "M1 9l7-7 7 7M3 8v7h4v-4h3v4h3V8M12 5V2" },
  { name: "Tree View Toggle", d: "M1.5 1.5h13v13h-13zM3 4h4M4.5 4v8M5 8h3M5 12h3M9 7h4v2H9zM9 11h4v2H9z", active: true },
  { name: "Preview", d: "M1.5 2.5h13v11h-13zM4 5h5v4H4zM10 7a2.5 2.5 0 1 0 .1 0", active: true },
  { name: "Description", d: "M1.5 1.5h13v13h-13zM5 4h5M8 7h5M8 9h5M8 11h5", active: true },
];

const PaletteToolbar = () => (
  <div className="flex h-[22px] items-center pl-[2px]">
    {tools.map((e) => (
      <div key={e.name} className="flex h-full items-center">
        <button aria-label={e.name} className={clsx("flex h-full w-5 items-center justify-center", e.active && "bg-[#cce4f7]")}>
          <Icon>
            <path d={e.d} stroke={e.active ? "#33506b" : "#666"} fill={e.name === "Forward" ? "#999" : "none"} />
          </Icon>
        </button>
        {e.caret && <Caret className={clsx("mr-1 ml-[2px]", e.name === "Back" ? "fill-black" : "fill-gray-500")} />}
        {e.sep && <span className="mx-px h-4 w-px bg-gray-300" />}
      </div>
    ))}
    <button aria-label="Views" className="ml-1 flex items-center gap-1">
      <Icon>
        <path d="M2 2.5h13v11H2zM2 8h13M2 11h13M6 5v8M11 5v8" stroke="#666" />
        <path d="M2 3h13v2H2z" fill="#444" stroke="none" />
      </Icon>
      <Caret className="fill-black" />
    </button>
  </div>
);

const DesignCenter = () => (
  <section className="absolute top-[22px] left-[258px] flex h-[376px] w-[769px] border-[3px] border-[#4b4d50] bg-[#4f4f4f] text-gray-800">
    <div className="flex w-[18px] shrink-0 flex-col items-center gap-2 pt-[2px] pr-[3px]">
      <button aria-label="Close palette" className="flex">
        <Cross className="stroke-white" />
      </button>
      <Icon w={8} h={8}>
        <path d="M1 0v8M7 0v8" stroke="#fff" strokeWidth="2" />
        <path d="M2 4l3-3v6z" fill="#fff" stroke="none" />
      </Icon>
      <Icon w={10} h={10}>
        <circle cx="5" cy="5" r="2.5" stroke="#fff" strokeWidth="1.5" />
        <path d="M1 1l2 2M9 1L7 3M1 9l2-2M9 9L7 7M5 0v2M5 8v2M0 5h2M8 5h2" stroke="#fff" />
      </Icon>
      <span className="mt-auto rotate-180 leading-3 text-gray-200 [writing-mode:vertical-rl]">DESIGNCENTER</span>
      <Icon w={12} h={14}>
        <path d="M0 1h12v12H0z" fill="#e4e4e4" stroke="none" />
        <path d="M0 4h12M0 7h5M0 10h5M6 4v9M9 4v9" stroke="#555" />
      </Icon>
    </div>

    <div className="flex min-w-0 flex-1 flex-col bg-[#f0f0f0]">
      <PaletteToolbar />
      <div className="flex h-[18px] items-end">
        <button className="h-[18px] border-x border-t border-gray-300 bg-white px-1">Folders</button>
        <button className="h-4 border-r border-gray-300 px-[3px]">Open Drawings</button>
        <button className="h-4 border-r border-gray-300 px-1">History</button>
      </div>

      <div className="flex min-h-0 flex-1">
        <div className="mt-[3px] mr-[2px] flex w-[202px] shrink-0 flex-col border border-gray-400">
          <div className="flex h-4 items-center justify-between border-b border-gray-300 bg-[#ececec] pr-1 pl-[3px]">
            <h2>Folder List</h2>
            <Cross className="stroke-black" />
          </div>
          <div className="flex min-h-0 flex-1">
            <TreeView />
            <div className="flex w-[13px] flex-col items-center justify-between bg-[#f0f0f0] py-1">
              <Chevron d="M1 6l3-3 3 3" />
              <span className="mt-9 mb-auto h-[59px] w-full bg-[#cdcdcd]" />
              <Chevron d="M1 2l3 3 3-3" />
            </div>
          </div>
          <div className="flex h-[13px] items-center pr-4 pl-1">
            <Chevron d="M6 1L3 4l3 3" />
            <span className="mr-[3px] ml-9 h-full flex-1 bg-[#cdcdcd]" />
            <Chevron d="M2 1l3 3-3 3" />
          </div>
        </div>

        <div className="flex min-w-0 flex-1 flex-col gap-[2px]">
          <div className="flex-1 border border-gray-300 bg-white">
            <ul className="flex flex-wrap">
              {categories.map((e) => (
                <li key={e.name} className="flex h-[66px] w-[63px] flex-col items-center">
                  <svg width="32" height="32" viewBox="0 0 32 32" fill="none" aria-hidden="true">
                    {e.icon}
                  </svg>
                  <span className="mt-px leading-4">{e.label}</span>
                </li>
              ))}
            </ul>
          </div>
          <div className="flex h-[60px] justify-end border border-gray-400 p-1">
            <Cross className="stroke-black" />
          </div>
          <div className="flex h-[65px] flex-col items-end justify-between border border-gray-400 p-1">
            <Cross className="stroke-black" />
            <Chevron d="M1 6l3-3 3 3" className="mt-2 mb-auto stroke-gray-400" />
            <Chevron d="M1 2l3 3 3-3" className="stroke-gray-400" />
          </div>
        </div>
      </div>
      <p className="h-[22px] leading-[18px]">F:\civil engineer\4 th civil engineer\Peoject detail\Tower-Final-2.dwg (12 Item(s))</p>
    </div>

    <svg width="10" height="15" viewBox="0 0 10 15" className="absolute top-[136px] left-[306px]" aria-hidden="true">
      <path d="M1 1v11l3-3 2 5 2-1-2-4h3z" fill="#fff" fillOpacity="0.6" stroke="#777" />
    </svg>
  </section>
);

/* ---------- drawing area ---------- */

const ViewCube = () => (
  <div className="absolute top-[12px] right-[15px] flex w-[86px] flex-col items-center font-['Liberation_Sans'] text-[15px] leading-4 font-bold text-[#b9bec4]">
    <div className="relative flex size-[96px] items-center justify-center">
      <span className="absolute inset-[7px] rounded-full border-[9px] border-[#414a55]" />
      <span className="absolute top-0">N</span>
      <span className="absolute bottom-0">S</span>
      <span className="absolute left-[2px]">W</span>
      <span className="absolute right-[4px]">E</span>
      <button className="relative flex size-[36px] items-center justify-center border-[6px] border-[#c2c4c6] bg-[#b2b5b8] text-[10px] text-[#3d4650]">TOP</button>
    </div>
    <button className="mt-[15px] h-[14px] w-[38px] rounded border border-[#b4b9c0] bg-[#9a9fa8] pr-3 text-[10px] leading-3 font-normal text-[#5c6470]">WCS</button>
  </div>
);

const NavBar = () => (
  <div className="absolute top-[159px] right-[3px] flex h-[181px] w-[26px] flex-col items-center justify-between rounded border border-[#6a7077] bg-[#596068] py-3">
    <Icon w={20} h={20}>
      <g stroke="#464d55">
        <circle cx="10" cy="10" r="8" />
        <circle cx="10" cy="10" r="4" />
        <path d="M14 14l4 4" />
      </g>
    </Icon>
    <Icon w={20} h={20}>
      <path d="M4 10c-2-3 1-4 2-1V4l3-1v6V3l3 0v6l3-4v8c0 4-3 6-6 6s-4-3-5-9z" stroke="#464d55" />
    </Icon>
    <Icon w={20} h={20}>
      <path d="M2 3l12 12M14 3L2 15" stroke="#464d55" strokeWidth="1.5" />
      <circle cx="15" cy="14" r="3" stroke="#464d55" />
    </Icon>
    <Icon w={20} h={20}>
      <path d="M10 1v18M1 11h18M7 4l3-3 3 3M7 16l3 3 3-3M4 8l-3 3 3 3M16 8l3 3-3 3" stroke="#464d55" />
      <circle cx="10" cy="10" r="3" stroke="#464d55" />
    </Icon>
    <Icon w={20} h={20}>
      <path d="M2 1h16v6H2zM7 1v6M13 1v6M2 7h12v12H2z" stroke="#464d55" />
      <path d="M6 10l5 3-5 3z" fill="#464d55" stroke="none" />
    </Icon>
  </div>
);

const CommandLine = () => (
  <div className="absolute bottom-px left-[327px] flex h-[22px] w-[631px] items-center border border-[#777] bg-[#5c5c5c]">
    <span className="ml-[2px] h-4 w-1 border-x-2 border-dotted border-[#999]" />
    <button aria-label="Close command line" className="ml-[5px]">
      <Cross className="stroke-gray-200" />
    </button>
    <button aria-label="Customize command line" className="ml-2">
      <Icon w={14} h={14}>
        <path d="M5 5l7 7" stroke="#ccc" strokeWidth="3" />
        <path d="M2 5a3 3 0 1 0 3-3" stroke="#ccc" strokeWidth="2" />
      </Icon>
    </button>
    <label className="ml-[3px] flex h-full flex-1 items-center gap-[3px] bg-[#b9bbbd] px-1">
      <Icon w={12} h={12}>
        <path d="M0 0h12v12H0z" fill="#8f9193" stroke="none" />
        <path d="M2 3l3 3-3 3M6 9h4" stroke="#ddd" />
      </Icon>
      <Caret className="fill-gray-600" />
      <input
        aria-label="Command"
        placeholder="Type a command"
        className="h-full min-w-0 flex-1 bg-transparent font-['Liberation_Mono'] text-[10px] italic outline-none placeholder:text-[#6d6f71]"
      />
      <Caret className="rotate-180 fill-gray-800" />
    </label>
  </div>
);

const Canvas = () => (
  <main className="relative min-h-[512px] flex-1 overflow-hidden border-r-2 border-[#a9bccd] bg-[#202832] bg-[linear-gradient(to_right,#2b3440_1px,transparent_1px),linear-gradient(to_bottom,#2b3440_1px,transparent_1px)] bg-[length:46px_48px] [background-position:38px_4px]">
    <p className="py-1 pl-[2px] leading-4 text-gray-200">[−][Top][2D Wireframe]</p>
    <DesignCenter />
    <ViewCube />
    <NavBar />
    <svg width="64" height="68" viewBox="0 0 64 68" className="absolute bottom-[6px] left-[6px]" fill="none" stroke="#b4bac1" aria-hidden="true">
      <path d="M6.5 18v44M11 60.5H48M2.5 56.5h8v8h-8z" />
      <text x="7" y="14" fontSize="16" fill="#b4bac1" stroke="none">Y</text>
      <text x="50" y="60" fontSize="16" fill="#b4bac1" stroke="none">X</text>
    </svg>
    <CommandLine />
  </main>
);

/* ---------- bottom bars ---------- */

const LayoutTabs = () => (
  <div className="flex h-[18px] items-start pl-[6px]">
    {["Model", "Layout1", "Layout2"].map((e) => (
      <button
        key={e}
        className={clsx(
          "h-4 w-[53px] leading-4 [clip-path:polygon(0_0,100%_0,92%_85%,86%_100%,14%_100%,8%_85%)]",
          e === "Model" ? "bg-[#8d8d8d] font-bold text-white" : "bg-[#5a5a5a] text-[#b9b9b9]",
        )}
      >
        {e}
      </button>
    ))}
    <button aria-label="New layout" className="ml-1 flex h-4 w-5 items-center justify-center rounded-b-md bg-[#555]">
      <Icon w={8} h={8}>
        <path d="M4 0v8M0 4h8" stroke="#ccc" strokeWidth="2" />
      </Icon>
    </button>
  </div>
);

const annotation = <path d="M8 1l2 7 4 6-6-3-6 3 4-6z" fill="#e6e6e6" stroke="none" />;

type StatusItem = { name: string; icon: ReactNode; on?: boolean; caret?: boolean };

const statusItems: StatusItem[] = [
  { name: "Grid", on: true, icon: <path d="M4.5 1v14M8.5 1v14M12.5 1v14M1 4.5h14M1 8.5h14M1 12.5h14" stroke="#cfe3f7" /> },
  { name: "Snap", caret: true, icon: <path d="M3 4h11M3 8h11M3 12h11" strokeDasharray="2 2" strokeWidth="2" /> },
  {
    name: "Dynamic input",
    on: true,
    icon: (
      <>
        <path d="M4.5 2v6M1 5.5h6" stroke="#fff" />
        <path d="M7 8h8v5H7z" fill="#fff" stroke="none" />
      </>
    ),
  },
  { name: "Ortho", icon: <path d="M3.5 1v12.5h12M3 9.5h4.5v4" /> },
  {
    name: "Polar",
    on: true,
    caret: true,
    icon: (
      <>
        <circle cx="7" cy="9" r="6" stroke="#e4effa" />
        <path d="M7 9l7-7M7 9h8" stroke="#e4effa" />
      </>
    ),
  },
  { name: "Isometric", caret: true, icon: <path d="M8 2v12M3 3l10 9M8 8l3-4" stroke="#999" /> },
  { name: "Tracking", on: true, icon: <path d="M14 2L2 14h13M5 9l4 4" stroke="#e4effa" /> },
  {
    name: "Object snap",
    on: true,
    caret: true,
    icon: (
      <>
        <path d="M3.5 4.5h10v9h-10z" stroke="#e4effa" />
        <circle cx="3" cy="3" r="2" stroke="#e4effa" />
      </>
    ),
  },
  {
    name: "Lineweight",
    icon: (
      <>
        <path d="M1 4h6M1 8h6M1 12h8" strokeWidth="2" />
        <path d="M8 3.5h7M8 7.5h7M10 11.5h5" />
      </>
    ),
  },
  {
    name: "Annotation visibility",
    on: true,
    icon: (
      <>
        {annotation}
        <circle cx="13" cy="4" r="2" stroke="#fff" />
      </>
    ),
  },
  {
    name: "Auto scale",
    icon: (
      <>
        {annotation}
        <path d="M13 1v5M11 3h4" />
      </>
    ),
  },
  { name: "Annotation scale", icon: annotation },
];

const StatusBar = () => (
  <footer className="flex h-[22px] justify-end">
    <div className="flex items-center border-t border-l border-[#6c6c6c] bg-[#474747] text-gray-200">
      <button className="w-[44px] border-r border-[#5c5c5c] text-[11px]">MODEL</button>
      {statusItems.map((e) => (
        <div key={e.name} className="flex h-full items-center">
          <button aria-label={e.name} className={clsx("flex h-full w-5 items-center justify-center", e.on && "bg-[#4a7fc0]")}>
            <Icon>{e.icon}</Icon>
          </button>
          {e.caret && <Caret className="mx-[3px] fill-gray-100" />}
        </div>
      ))}
      <button className="flex items-center gap-px pl-1">
        1:1
        <Caret />
      </button>
      <button aria-label="Workspace" className="ml-1 flex items-center gap-1 border-l border-[#5c5c5c] pl-1">
        <Icon>
          <circle cx="8" cy="8" r="3.5" stroke="#e0e0e0" strokeWidth="3" />
          <path d="M8 1v3M8 12v3M1 8h3M12 8h3M3 3l2 2M11 11l2 2M13 3l-2 2M5 11l-2 2" stroke="#e0e0e0" strokeWidth="2" />
        </Icon>
        <Caret />
      </button>
      <button aria-label="Annotation monitor" className="ml-[2px] flex w-5 justify-center">
        <Icon>
          <path d="M8 2v12M2 8h12" stroke="#eee" strokeWidth="2" />
        </Icon>
      </button>
      <button aria-label="Graphics performance" className="flex h-full w-5 items-center justify-center bg-[#4a7fc0]">
        <Icon>
          <circle cx="8" cy="8" r="6.5" fill="#8db9e4" stroke="#cfe3f7" />
          <path d="M7 10l4-5" stroke="#fff" strokeWidth="2" />
        </Icon>
      </button>
      <button aria-label="Clean screen" className="ml-[3px] flex w-[26px] justify-center border-l border-[#6c6c6c]">
        <Icon>
          <path d="M1.5 3.5h13v10h-13zM4 11v-2M4 11.5h2M10 5.5h2.5v2" />
        </Icon>
      </button>
      <button aria-label="Customization">
        <Icon w={12}>
          <path d="M0 3h12M0 8h12M0 13h12" strokeWidth="2" />
        </Icon>
      </button>
    </div>
  </footer>
);

export default function App() {
  return (
    <div className="flex min-h-screen flex-col bg-[#393939] font-['Roboto','DejaVu_Sans',sans-serif] text-[10px] leading-4">
      <Header />
      <Ribbon />
      <FileTabs />
      <Canvas />
      <LayoutTabs />
      <StatusBar />
    </div>
  );
}
